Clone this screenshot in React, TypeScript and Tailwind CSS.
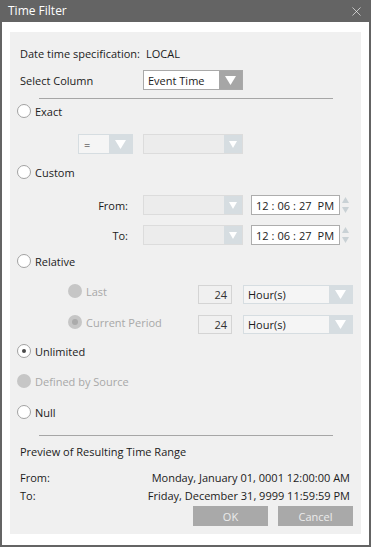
import { X } from "lucide-react";

const font = { fontFamily: '"Open Sans", "Noto Sans", sans-serif' };

function Tri({ size = "big" }: { size?: "big" | "small" }) {
  return size === "big" ? (
    <svg width="11" height="9" viewBox="0 0 11 9">
      <path d="M0 0 H11 L5.5 9 Z" fill="#ffffff" />
    </svg>
  ) : (
    <svg width="8" height="7" viewBox="0 0 8 7">
      <path d="M0 0 H8 L4 7 Z" fill="#ffffff" />
    </svg>
  );
}

function Radio({
  label,
  checked = false,
  disabled = false,
}: {
  label: string;
  checked?: boolean;
  disabled?: boolean;
}) {
  return (
    <div className="flex items-center gap-[4px]">
      {disabled ? (
        <span className="flex h-[14px] w-[14px] items-center justify-center rounded-full bg-[#c6c6c6]">
          {checked && <span className="h-[6px] w-[6px] rounded-full bg-[#ababab]" />}
        </span>
      ) : (
        <span className="flex h-[14px] w-[14px] items-center justify-center rounded-full border border-[#a2a2a2] bg-white">
          {checked && <span className="h-[4px] w-[4px] rounded-full bg-[#4a4a4a]" />}
        </span>
      )}
      <span className={disabled ? "text-[#a8a8a8]" : "text-[#222222]"}>{label}</span>
    </div>
  );
}

function DisabledCombo({ width }: { width: string }) {
  return (
    <div className={`flex h-[20px] ${width} border border-[#dcdcdc] bg-[#ececec]`}>
      <div className="flex-1" />
      <div className="flex w-[18px] items-center justify-center bg-[#d6dde1]">
        <Tri size="small" />
      </div>
    </div>
  );
}

function TimeBox() {
  return (
    <div className="flex items-center gap-[1px]">
      <div className="flex h-[20px] w-[89px] items-center border border-[#adadad] bg-white pl-[4px] text-[#1b1b1b]">
        <span>12</span>
        <span className="px-[3px]">:</span>
        <span>06</span>
        <span className="px-[3px]">:</span>
        <span>27</span>
        <span className="pl-[6px]">PM</span>
      </div>
      <svg width="9" height="20" viewBox="0 0 9 20">
        <path d="M1 8 L4.5 2 L8 8 Z" fill="#c9d1d5" />
        <path d="M1 12 L4.5 18 L8 12 Z" fill="#c9d1d5" />
      </svg>
    </div>
  );
}

function HourCombo() {
  return (
    <div className="flex h-[19px] w-[110px] border border-[#d6dde1] bg-[#f5f5f5]">
      <div className="flex flex-1 items-center pl-[4px] text-[#1b1b1b]">Hour(s)</div>
      <div className="flex w-[23px] items-center justify-center bg-[#d6dde1]">
        <Tri />
      </div>
    </div>
  );
}

export default function App() {
  return (
    <div
      className="flex h-[547px] w-[371px] flex-col bg-[#646464] px-[2px] pb-[2px] text-[11px] leading-none"
      style={font}
    >
      <div className="flex h-[22px] items-center justify-between pl-[6px] pr-[5px] text-[12px] text-white">
        <span>Time Filter</span>
        <X className="h-[15px] w-[15px]" strokeWidth={1} />
      </div>

      <div className="flex-1 bg-white px-[8px] pt-[10px]">
        <div className="flex flex-col bg-[#f0f0f0] pb-[8px] pl-[7px] pr-[8px] pt-[11px]">
          {/* date time spec */}
          <div className="flex h-[20px] items-center pl-[3px] text-[#1b1b1b]">
            <span className="w-[123px]">Date time specification:</span>
            <span className="pl-[3px]">LOCAL</span>
          </div>

          {/* select column */}
          <div className="mt-[7px] flex h-[20px] items-center pl-[3px] text-[#1b1b1b]">
            <span className="w-[123px]">Select Column</span>
            <div className="flex h-[20px] w-[100px] border border-[#a9a9a9] bg-white">
              <div className="flex flex-1 items-center pl-[4px]">Event Time</div>
              <div className="flex w-[23px] items-center justify-center bg-[#a6a6a6]">
                <Tri />
              </div>
            </div>
          </div>

          <div className="ml-[22px] mt-[8px] h-[1px] w-[294px] bg-[#a6a6a6]" />

          {/* exact */}
          <div className="mt-[2px] flex h-[20px] items-center">
            <Radio label="Exact" />
          </div>
          <div className="mt-[13px] flex h-[20px] items-center pl-[61px]">
            <div className="flex h-[20px] w-[55px] border border-[#d6dde1] bg-[#f5f5f5]">
              <div className="flex flex-1 items-center pl-[5px] text-[#1b1b1b]">=</div>
              <div className="flex w-[23px] items-center justify-center bg-[#d6dde1]">
                <Tri />
              </div>
            </div>
            <div className="ml-[10px]">
              <DisabledCombo width="w-[100px]" />
            </div>
          </div>

          {/* custom */}
          <div className="mt-[8px] flex h-[20px] items-center">
            <Radio label="Custom" />
          </div>
          <div className="mt-[13px] flex h-[20px] items-center">
            <span className="w-[111px] text-right text-[#1b1b1b]">From:</span>
            <div className="ml-[15px]">
              <DisabledCombo width="w-[100px]" />
            </div>
            <div className="ml-[8px]">
              <TimeBox />
            </div>
          </div>
          <div className="mt-[10px] flex h-[20px] items-center">
            <span className="w-[111px] text-right text-[#1b1b1b]">To:</span>
            <div className="ml-[15px]">
              <DisabledCombo width="w-[100px]" />
            </div>
            <div className="ml-[8px]">
              <TimeBox />
            </div>
          </div>

          {/* relative */}
          <div className="mt-[6px] flex h-[20px] items-center">
            <Radio label="Relative" />
          </div>
          <div className="mt-[13px] flex h-[20px] items-center">
            <div className="w-[181px] -translate-y-[3px] pl-[51px]">
              <Radio label="Last" disabled />
            </div>
            <div className="flex h-[19px] w-[34px] items-center justify-end border border-[#d4d4d4] pr-[4px] text-[#333333]">
              24
            </div>
            <div className="ml-[11px]">
              <HourCombo />
            </div>
          </div>
          <div className="mt-[10px] flex h-[20px] items-center">
            <div className="w-[181px] -translate-y-[2px] pl-[51px]">
              <Radio label="Current Period" checked disabled />
            </div>
            <div className="flex h-[19px] w-[34px] items-center justify-end border border-[#d4d4d4] pr-[4px] text-[#333333]">
              24
            </div>
            <div className="ml-[11px]">
              <HourCombo />
            </div>
          </div>

          <div className="mt-[7px] flex h-[20px] items-center">
            <Radio label="Unlimited" checked />
          </div>
          <div className="mt-[10px] flex h-[20px] items-center">
            <Radio label="Defined by Source" disabled />
          </div>
          <div className="mt-[11px] flex h-[20px] items-center">
            <Radio label="Null" />
          </div>

          <div className="ml-[22px] mt-[13px] h-[1px] w-[294px] bg-[#a6a6a6]" />

          <div className="mt-[5px] flex h-[20px] items-center pl-[3px] text-[#1b1b1b]">
            Preview of Resulting Time Range
          </div>
          <div className="mt-[7px] flex h-[18px] items-center justify-between pl-[3px] pr-[3px] text-[#1b1b1b]">
            <span>From:</span>
            <span>Monday, January 01, 0001 12:00:00 AM</span>
          </div>
          <div className="flex h-[18px] items-center justify-between pl-[3px] pr-[3px] text-[#1b1b1b]">
            <span>To:</span>
            <span>Friday, December 31, 9999 11:59:59 PM</span>
          </div>

          <div className="mt-[2px] flex justify-end gap-[10px]">
            <button className="flex h-[20px] w-[75px] items-center justify-center bg-[#a9a9a9] text-[#ececec]">
              OK
            </button>
            <button className="flex h-[20px] w-[75px] items-center justify-center bg-[#a9a9a9] text-[#ececec]">
              Cancel
            </button>
          </div>
        </div>
      </div>
    </div>
  );
}
